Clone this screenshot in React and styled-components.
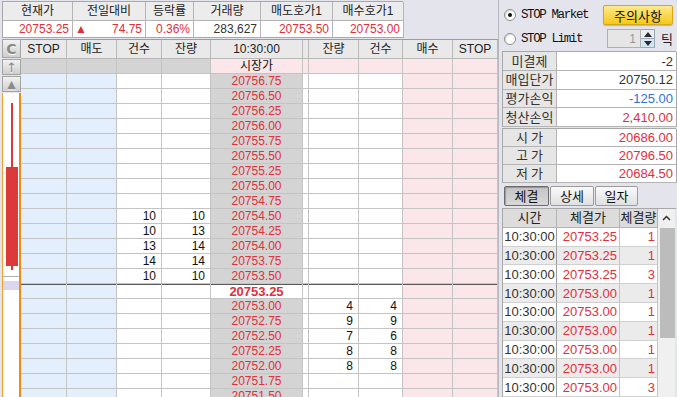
import React from 'react';
import styled, { createGlobalStyle } from 'styled-components';

const GlobalStyle = createGlobalStyle`
  html, body {
    margin: 0;
    padding: 0;
    background: #e4e4ec;
    overflow: hidden;
  }
  * { box-sizing: border-box; }
`;

const FONT = `"Liberation Sans", "Noto Sans CJK KR", sans-serif`;
const RED = '#e0303c';
const BLUE = '#2f72d8';
const LINE = '#c4c4c4';

const Screen = styled.div`
  display: flex;
  width: 677px;
  height: 397px;
  overflow: hidden;
  background: #e4e4ec;
  font-family: ${FONT};
  font-size: 12px;
  color: #222;
`;

const LeftPane = styled.div`
  display: flex;
  flex-direction: column;
  width: 498px;
  flex-shrink: 0;
  padding-left: 2px;
`;

const QuoteTable = styled.div`
  display: grid;
  grid-template-columns: 70px 73px 48px 67px 72px 71px;
  grid-template-rows: 19px 17px;
  width: 401px;
  margin-top: 1px;
  border-top: 1px solid #a8a8a8;
  border-left: 1px solid #a8a8a8;
`;

const QuoteHead = styled.div`
  display: flex;
  align-items: center;
  justify-content: center;
  background: #ececec;
  border-right: 1px solid #b4b4b4;
  border-bottom: 1px solid #b4b4b4;
  line-height: 1;
`;

const QuoteValue = styled.div`
  display: flex;
  align-items: center;
  justify-content: ${({ $split }) => ($split ? 'space-between' : 'flex-end')};
  padding: 0 3px 0 2px;
  background: #fff;
  color: ${({ $color }) => $color || '#333'};
  border-right: 1px solid #b4b4b4;
  border-bottom: 1px solid #a8a8a8;
  line-height: 1;
`;

const Ladder = styled.div`
  display: flex;
  margin-top: 1px;
`;

const SideColumn = styled.div`
  display: flex;
  flex-direction: column;
  width: 19px;
`;

const SideButton = styled.div`
  display: flex;
  align-items: center;
  justify-content: center;
  height: ${({ $h }) => $h}px;
  margin-bottom: 1px;
  background: linear-gradient(#f2f2f2, #cfcfcf);
  border: 1px solid #a4a4a4;
  color: #8a8a8a;
  font-family: "DejaVu Sans", sans-serif;
  font-weight: ${({ $bold }) => ($bold ? 700 : 400)};
  font-size: ${({ $size }) => $size || 12}px;
  text-shadow: 0 1px 0 #fff;
`;

const ChartBox = styled.div`
  flex: 1;
  background: #fff;
  border-left: 1px solid #f0a030;
  border-right: 2px solid #f08a10;
`;

const Book = styled.div`
  display: grid;
  grid-template-columns: 46px 50px 45px 49px 92px 6px 50px 44px 50px 45px;
  grid-template-rows: 19px;
  grid-auto-rows: 15px;
  width: 477px;
  border-top: 1px solid #9c9c9c;
`;

const HeadCell = styled.div`
  display: flex;
  align-items: center;
  justify-content: center;
  background: #e9e9e9;
  border-right: 1px solid #b8b8b8;
  border-bottom: 1px solid #b8b8b8;
  line-height: 1;
`;

const Cell = styled.div`
  display: flex;
  align-items: center;
  justify-content: ${({ $align }) =>
    $align === 'right' ? 'flex-end' : $align === 'center' ? 'center' : 'flex-start'};
  padding: 0 5px 0 0;
  background: ${({ $bg }) => $bg || '#fff'};
  color: ${({ $color }) => $color || '#111'};
  font-weight: ${({ $bold }) => ($bold ? 700 : 400)};
  font-size: ${({ $bold }) => ($bold ? 13 : 12)}px;
  border-right: 1px solid ${LINE};
  border-bottom: 1px solid ${LINE};
  box-shadow: ${({ $topLine }) => ($topLine ? 'inset 0 1px 0 #5a5a5a' : 'none')};
  line-height: 1;
  ${({ $align }) => $align === 'center' && 'padding: 0;'}
`;

const RightPane = styled.div`
  display: flex;
  flex-direction: column;
  width: 179px;
  padding: 0 1px 0 3px;
  border-left: 1px solid #b8b8c0;
`;

const OptionRow = styled.div`
  display: flex;
  align-items: center;
  height: 24px;
  margin-top: ${({ $top }) => $top || 0}px;
`;

const RadioLabel = styled.label`
  display: flex;
  align-items: center;
  gap: 5px;
  width: 100px;
  padding-left: 2px;
  font-family: "Liberation Mono", monospace;
  font-size: 12.5px;
  letter-spacing: -1.4px;
  color: #111;
`;

const Radio = styled.span`
  position: relative;
  flex-shrink: 0;
  width: 12px;
  height: 12px;
  border-radius: 50%;
  background: #fff;
  border: 1px solid #8c8c8c;
  box-shadow: inset 1px 1px 1px rgba(0, 0, 0, 0.15);

  &::after {
    content: '';
    display: ${({ $checked }) => ($checked ? 'block' : 'none')};
    position: absolute;
    left: 3px;
    top: 3px;
    width: 4px;
    height: 4px;
    border-radius: 50%;
    background: #111;
  }
`;

const WarnButton = styled.button`
  width: 70px;
  height: 20px;
  margin-left: auto;
  margin-right: 3px;
  padding: 0;
  font-family: ${FONT};
  font-size: 13px;
  color: #111;
  background: linear-gradient(#ffe98e, #f6c918);
  border: 1px solid #d6a716;
  border-radius: 2px;
  box-shadow: 0 1px 1px rgba(0, 0, 0, 0.2);
`;

const Spinner = styled.div`
  display: flex;
  margin-left: 5px;
  height: 19px;
`;

const SpinInput = styled.div`
  display: flex;
  align-items: center;
  justify-content: flex-end;
  width: 34px;
  padding-right: 4px;
  background: #e6e6e6;
  border: 1px solid #b0b0b0;
  color: #999;
`;

const SpinButtons = styled.div`
  display: flex;
  flex-direction: column;
  width: 14px;
  border: 1px solid #9aa8b8;
  border-left: none;
`;

const SpinArrow = styled.div`
  flex: 1;
  display: flex;
  align-items: center;
  justify-content: center;
  background: ${({ $down }) => ($down ? '#d4e6f6' : '#e8eef4')};
  border-top: ${({ $down }) => ($down ? '1px solid #9aa8b8' : 'none')};
`;

const TickLabel = styled.span`
  margin-left: 6px;
  font-size: 13px;
`;

const InfoTable = styled.div`
  display: grid;
  grid-template-columns: 54px 120px;
  grid-auto-rows: ${({ $row }) => $row}px;
  margin-top: ${({ $top }) => $top}px;
  border-top: 1px solid #a8a8a8;
  border-left: 1px solid #a8a8a8;
`;

const InfoLabel = styled.div`
  display: flex;
  align-items: center;
  justify-content: ${({ $spread }) => ($spread ? 'space-evenly' : 'center')};
  padding: 0 ${({ $spread }) => ($spread ? '10px' : '0')};
  background: #e6e6e6;
  color: #333;
  font-size: 13px;
  border-right: 1px solid #b4b4b4;
  border-bottom: 1px solid #b4b4b4;
  line-height: 1;
`;

const InfoValue = styled.div`
  display: flex;
  align-items: center;
  justify-content: flex-end;
  padding-right: 3px;
  background: #fff;
  color: ${({ $color }) => $color || '#333'};
  font-size: 13px;
  border-right: 1px solid #a8a8a8;
  border-bottom: 1px solid #b4b4b4;
  line-height: 1;
`;

const TabBar = styled.div`
  display: flex;
  gap: 1px;
  height: 20px;
  margin: 3px 0 2px 2px;
`;

const Tab = styled.div`
  display: flex;
  align-items: center;
  justify-content: center;
  width: ${({ $w }) => $w}px;
  font-size: 13px;
  color: #111;
  background: ${({ $active }) => ($active ? 'linear-gradient(#c4c4c4, #d8d8d8)' : 'linear-gradient(#fafafa, #e0e0e0)')};
  border: 1px solid ${({ $active }) => ($active ? '#6c6c6c' : '#9c9c9c')};
  border-radius: 2px;
  box-shadow: ${({ $active }) => ($active ? 'inset 1px 1px 1px rgba(0,0,0,0.25)' : 'none')};
`;

const TradeList = styled.div`
  display: flex;
  border-top: 1px solid #a8a8a8;
  border-left: 1px solid #a8a8a8;
`;

const TradeGrid = styled.div`
  display: grid;
  flex-shrink: 0;
  grid-template-columns: 54px 63px 38px;
  grid-template-rows: 19px;
  grid-auto-rows: 18.8px;
`;

const TradeHead = styled.div`
  display: flex;
  align-items: center;
  justify-content: center;
  background: #dcdcdc;
  font-size: 13px;
  border-right: 1px solid #b4b4b4;
  border-bottom: 1px solid #b4b4b4;
  line-height: 1;
`;

const TradeCell = styled.div`
  display: flex;
  align-items: center;
  justify-content: ${({ $center }) => ($center ? 'center' : 'flex-end')};
  padding-right: ${({ $center }) => ($center ? 0 : 2)}px;
  background: ${({ $alt }) => ($alt ? '#ebebeb' : '#fff')};
  color: ${({ $color }) => $color || '#333'};
  font-size: 13px;
  border-right: 1px solid ${({ $strong }) => ($strong ? '#9c9c9c' : '#c4c4c4')};
  border-bottom: 1px solid #d0d0d0;
  line-height: 1;
`;

const ScrollBar = styled.div`
  display: flex;
  flex-direction: column;
  flex-shrink: 0;
  width: 17px;
  background: #f0f0f0;
`;

const ScrollUp = styled.div`
  display: flex;
  align-items: center;
  justify-content: center;
  height: 19px;
  background: #f0f0f0;
`;

const ScrollThumb = styled.div`
  height: 110px;
  margin-left: 2px;
  background: #bcbcbc;
`;

const sellRows = [
  ['20756.75'], ['20756.50'], ['20756.25'], ['20756.00'], ['20755.75'],
  ['20755.50'], ['20755.25'], ['20755.00'], ['20754.75'],
  ['20754.50', 10, 10], ['20754.25', 10, 13], ['20754.00', 13, 14],
  ['20753.75', 14, 14], ['20753.50', 10, 10],
];

const buyRows = [
  ['20753.00', 4, 4], ['20752.75', 9, 9], ['20752.50', 7, 6],
  ['20752.25', 8, 8], ['20752.00', 8, 8], ['20751.75'], ['20751.50'],
];

const trades = [
  ['20753.25', 1], ['20753.25', 1], ['20753.25', 3], ['20753.00', 1], ['20753.00', 1],
  ['20753.00', 1], ['20753.00', 1], ['20753.00', 1], ['20753.00', 3],
];

const BLUE_BG = '#e3effc';
const PINK_BG = '#fbe6e9';
const GREY_BG = '#d4d4d4';

const Candle = () => (
  <svg width="16" height="305" viewBox="0 0 16 305">
    <rect x="8" y="10" width="2" height="167" fill="#dc3a3a" />
    <rect x="3" y="74" width="12" height="99" fill="#dc3a3a" />
    <rect x="0" y="183" width="16" height="1" fill="#b4b4b4" />
    <rect x="0" y="188" width="16" height="9" fill="#dcd6f0" />
  </svg>
);

const Caret = ({ down }) => (
  <svg width="8" height="5" viewBox="0 0 8 5">
    <path d={down ? 'M0 0 L8 0 L4 5 Z' : 'M0 5 L8 5 L4 0 Z'} fill="#2a2a2a" />
  </svg>
);

const PriceRow = ({ price, cnt, qty, side, current }) => {
  const top = !!current;
  const sell = side === 'sell';
  return (
    <>
      <Cell $bg={BLUE_BG} $topLine={top} />
      <Cell $bg={BLUE_BG} $topLine={top} />
      <Cell $align="right" $topLine={top}>{sell ? cnt : ''}</Cell>
      <Cell $align="right" $topLine={top}>{sell ? qty : ''}</Cell>
      <Cell
        $align="center"
        $bg={current ? '#fff' : GREY_BG}
        $color={RED}
        $bold={current}
        $topLine={top}
      >
        {price}
      </Cell>
      <Cell $topLine={top} />
      <Cell $align="right" $topLine={top}>{!sell ? qty : ''}</Cell>
      <Cell $align="right" $topLine={top}>{!sell ? cnt : ''}</Cell>
      <Cell $bg={PINK_BG} $topLine={top} />
      <Cell $bg={PINK_BG} $topLine={top} />
    </>
  );
};

export default function App() {
  const heads = ['STOP', '매도', '건수', '잔량', '10:30:00', '', '잔량', '건수', '매수', 'STOP'];
  return (
    <>
      <GlobalStyle />
      <Screen>
        <LeftPane>
          <QuoteTable>
            {['현재가', '전일대비', '등락률', '거래량', '매도호가1', '매수호가1'].map((h) => (
              <QuoteHead key={h}>{h}</QuoteHead>
            ))}
            <QuoteValue $color={RED}>20753.25</QuoteValue>
            <QuoteValue $color={RED} $split>
              <span>▲</span>
              <span>74.75</span>
            </QuoteValue>
            <QuoteValue $color={RED}>0.36%</QuoteValue>
            <QuoteValue>283,627</QuoteValue>
            <QuoteValue $color={RED}>20753.50</QuoteValue>
            <QuoteValue $color={RED}>20753.00</QuoteValue>
          </QuoteTable>

          <Ladder>
            <SideColumn>
              <SideButton $h={19} $bold $size={14}>C</SideButton>
              <SideButton $h={16} $size={13}>↑</SideButton>
              <SideButton $h={16} $size={11}>▲</SideButton>
              <ChartBox>
                <Candle />
              </ChartBox>
            </SideColumn>

            <Book>
              {heads.map((h, i) => (
                <HeadCell key={i}>{h}</HeadCell>
              ))}

              <Cell $bg={GREY_BG} />
              <Cell $bg={GREY_BG} />
              <Cell $bg={GREY_BG} />
              <Cell $bg={GREY_BG} />
              <Cell $align="center" $bg={PINK_BG}>시장가</Cell>
              <Cell $bg={PINK_BG} />
              <Cell $bg={PINK_BG} />
              <Cell $bg={PINK_BG} />
              <Cell $bg={PINK_BG} />
              <Cell $bg={PINK_BG} />

              {sellRows.map(([p, c, q]) => (
                <PriceRow key={p} price={p} cnt={c} qty={q} side="sell" />
              ))}
              <PriceRow price="20753.25" side="buy" current />
              {buyRows.map(([p, q, c]) => (
                <PriceRow key={p} price={p} cnt={c} qty={q} side="buy" />
              ))}
            </Book>
          </Ladder>
        </LeftPane>

        <RightPane>
          <OptionRow $top={3}>
            <RadioLabel>
              <Radio $checked />
              STOP Market
            </RadioLabel>
            <WarnButton>주의사항</WarnButton>
          </OptionRow>
          <OptionRow>
            <RadioLabel>
              <Radio />
              STOP Limit
            </RadioLabel>
            <Spinner>
              <SpinInput>1</SpinInput>
              <SpinButtons>
                <SpinArrow><Caret /></SpinArrow>
                <SpinArrow $down><Caret down /></SpinArrow>
              </SpinButtons>
            </Spinner>
            <TickLabel>틱</TickLabel>
          </OptionRow>

          <InfoTable $row={18.6} $top={1}>
            <InfoLabel>미결제</InfoLabel>
            <InfoValue>-2</InfoValue>
            <InfoLabel>매입단가</InfoLabel>
            <InfoValue>20750.12</InfoValue>
            <InfoLabel>평가손익</InfoLabel>
            <InfoValue $color={BLUE}>-125.00</InfoValue>
            <InfoLabel>청산손익</InfoLabel>
            <InfoValue $color={RED}>2,410.00</InfoValue>
          </InfoTable>

          <InfoTable $row={18} $top={1}>
            <InfoLabel $spread><span>시</span><span>가</span></InfoLabel>
            <InfoValue $color={RED}>20686.00</InfoValue>
            <InfoLabel $spread><span>고</span><span>가</span></InfoLabel>
            <InfoValue $color={RED}>20796.50</InfoValue>
            <InfoLabel $spread><span>저</span><span>가</span></InfoLabel>
            <InfoValue $color={RED}>20684.50</InfoValue>
          </InfoTable>

          <TabBar>
            <Tab $w={45} $active>체결</Tab>
            <Tab $w={44}>상세</Tab>
            <Tab $w={43}>일자</Tab>
          </TabBar>

          <TradeList>
            <TradeGrid>
              <TradeHead>시간</TradeHead>
              <TradeHead>체결가</TradeHead>
              <TradeHead>체결량</TradeHead>
              {trades.map(([price, vol], i) => (
                <React.Fragment key={i}>
                  <TradeCell $center $alt={i % 2 === 1} $strong>10:30:00</TradeCell>
                  <TradeCell $alt={i % 2 === 1} $color={RED}>{price}</TradeCell>
                  <TradeCell $alt={i % 2 === 1} $color={RED}>{vol}</TradeCell>
                </React.Fragment>
              ))}
            </TradeGrid>
            <ScrollBar>
              <ScrollUp>
                <svg width="9" height="6" viewBox="0 0 9 6">
                  <path d="M1 5 L4.5 1.5 L8 5" stroke="#333" strokeWidth="1.5" fill="none" />
                </svg>
              </ScrollUp>
              <ScrollThumb />
            </ScrollBar>
          </TradeList>
        </RightPane>
      </Screen>
    </>
  );
}
